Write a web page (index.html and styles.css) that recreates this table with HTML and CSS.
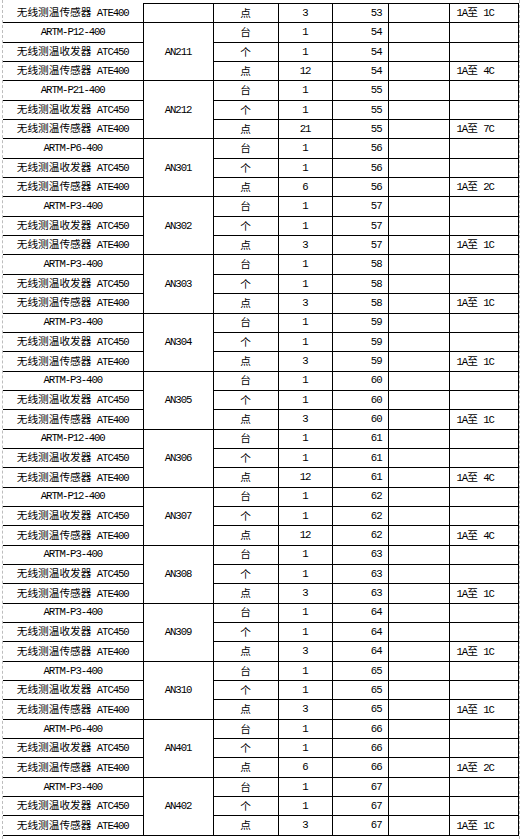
FILE: index.html
```html
<!DOCTYPE html>
<html lang="zh-CN">
<head>
<meta charset="utf-8">
<title>无线测温设备清单</title>
<link rel="stylesheet" href="styles.css">
</head>
<body>
<div class="page">
<table class="sheet">
<colgroup>
<col class="w1"><col class="w2"><col class="w3"><col class="w4"><col class="w5"><col class="w6"><col class="w7">
</colgroup>
<tbody>
<tr><td class="nt">无线测温传感器<span class="en"> ATE400</span></td><td></td><td>点</td><td class="en">3</td><td class="en num">53</td><td></td><td class="rem"><span class="en">1A</span>至<span class="en"> 1C</span></td></tr>

<tr><td class="en">ARTM-P12-400</td><td class="en" rowspan="3">AN211</td><td>台</td><td class="en">1</td><td class="en num">54</td><td></td><td></td></tr>
<tr><td>无线测温收发器<span class="en"> ATC450</span></td><td>个</td><td class="en">1</td><td class="en num">54</td><td></td><td></td></tr>
<tr><td>无线测温传感器<span class="en"> ATE400</span></td><td>点</td><td class="en">12</td><td class="en num">54</td><td></td><td class="rem"><span class="en">1A</span>至<span class="en"> 4C</span></td></tr>

<tr><td class="en">ARTM-P21-400</td><td class="en" rowspan="3">AN212</td><td>台</td><td class="en">1</td><td class="en num">55</td><td></td><td></td></tr>
<tr><td>无线测温收发器<span class="en"> ATC450</span></td><td>个</td><td class="en">1</td><td class="en num">55</td><td></td><td></td></tr>
<tr><td>无线测温传感器<span class="en"> ATE400</span></td><td>点</td><td class="en">21</td><td class="en num">55</td><td></td><td class="rem"><span class="en">1A</span>至<span class="en"> 7C</span></td></tr>

<tr><td class="en">ARTM-P6-400</td><td class="en" rowspan="3">AN301</td><td>台</td><td class="en">1</td><td class="en num">56</td><td></td><td></td></tr>
<tr><td>无线测温收发器<span class="en"> ATC450</span></td><td>个</td><td class="en">1</td><td class="en num">56</td><td></td><td></td></tr>
<tr><td>无线测温传感器<span class="en"> ATE400</span></td><td>点</td><td class="en">6</td><td class="en num">56</td><td></td><td class="rem"><span class="en">1A</span>至<span class="en"> 2C</span></td></tr>

<tr><td class="en">ARTM-P3-400</td><td class="en" rowspan="3">AN302</td><td>台</td><td class="en">1</td><td class="en num">57</td><td></td><td></td></tr>
<tr><td>无线测温收发器<span class="en"> ATC450</span></td><td>个</td><td class="en">1</td><td class="en num">57</td><td></td><td></td></tr>
<tr><td>无线测温传感器<span class="en"> ATE400</span></td><td>点</td><td class="en">3</td><td class="en num">57</td><td></td><td class="rem"><span class="en">1A</span>至<span class="en"> 1C</span></td></tr>

<tr><td class="en">ARTM-P3-400</td><td class="en" rowspan="3">AN303</td><td>台</td><td class="en">1</td><td class="en num">58</td><td></td><td></td></tr>
<tr><td>无线测温收发器<span class="en"> ATC450</span></td><td>个</td><td class="en">1</td><td class="en num">58</td><td></td><td></td></tr>
<tr><td>无线测温传感器<span class="en"> ATE400</span></td><td>点</td><td class="en">3</td><td class="en num">58</td><td></td><td class="rem"><span class="en">1A</span>至<span class="en"> 1C</span></td></tr>

<tr><td class="en">ARTM-P3-400</td><td class="en" rowspan="3">AN304</td><td>台</td><td class="en">1</td><td class="en num">59</td><td></td><td></td></tr>
<tr><td>无线测温收发器<span class="en"> ATC450</span></td><td>个</td><td class="en">1</td><td class="en num">59</td><td></td><td></td></tr>
<tr><td>无线测温传感器<span class="en"> ATE400</span></td><td>点</td><td class="en">3</td><td class="en num">59</td><td></td><td class="rem"><span class="en">1A</span>至<span class="en"> 1C</span></td></tr>

<tr><td class="en">ARTM-P3-400</td><td class="en" rowspan="3">AN305</td><td>台</td><td class="en">1</td><td class="en num">60</td><td></td><td></td></tr>
<tr><td>无线测温收发器<span class="en"> ATC450</span></td><td>个</td><td class="en">1</td><td class="en num">60</td><td></td><td></td></tr>
<tr><td>无线测温传感器<span class="en"> ATE400</span></td><td>点</td><td class="en">3</td><td class="en num">60</td><td></td><td class="rem"><span class="en">1A</span>至<span class="en"> 1C</span></td></tr>

<tr><td class="en">ARTM-P12-400</td><td class="en" rowspan="3">AN306</td><td>台</td><td class="en">1</td><td class="en num">61</td><td></td><td></td></tr>
<tr><td>无线测温收发器<span class="en"> ATC450</span></td><td>个</td><td class="en">1</td><td class="en num">61</td><td></td><td></td></tr>
<tr><td>无线测温传感器<span class="en"> ATE400</span></td><td>点</td><td class="en">12</td><td class="en num">61</td><td></td><td class="rem"><span class="en">1A</span>至<span class="en"> 4C</span></td></tr>

<tr><td class="en">ARTM-P12-400</td><td class="en" rowspan="3">AN307</td><td>台</td><td class="en">1</td><td class="en num">62</td><td></td><td></td></tr>
<tr><td>无线测温收发器<span class="en"> ATC450</span></td><td>个</td><td class="en">1</td><td class="en num">62</td><td></td><td></td></tr>
<tr><td>无线测温传感器<span class="en"> ATE400</span></td><td>点</td><td class="en">12</td><td class="en num">62</td><td></td><td class="rem"><span class="en">1A</span>至<span class="en"> 4C</span></td></tr>

<tr><td class="en">ARTM-P3-400</td><td class="en" rowspan="3">AN308</td><td>台</td><td class="en">1</td><td class="en num">63</td><td></td><td></td></tr>
<tr><td>无线测温收发器<span class="en"> ATC450</span></td><td>个</td><td class="en">1</td><td class="en num">63</td><td></td><td></td></tr>
<tr><td>无线测温传感器<span class="en"> ATE400</span></td><td>点</td><td class="en">3</td><td class="en num">63</td><td></td><td class="rem"><span class="en">1A</span>至<span class="en"> 1C</span></td></tr>

<tr><td class="en">ARTM-P3-400</td><td class="en" rowspan="3">AN309</td><td>台</td><td class="en">1</td><td class="en num">64</td><td></td><td></td></tr>
<tr><td>无线测温收发器<span class="en"> ATC450</span></td><td>个</td><td class="en">1</td><td class="en num">64</td><td></td><td></td></tr>
<tr><td>无线测温传感器<span class="en"> ATE400</span></td><td>点</td><td class="en">3</td><td class="en num">64</td><td></td><td class="rem"><span class="en">1A</span>至<span class="en"> 1C</span></td></tr>

<tr><td class="en">ARTM-P3-400</td><td class="en" rowspan="3">AN310</td><td>台</td><td class="en">1</td><td class="en num">65</td><td></td><td></td></tr>
<tr><td>无线测温收发器<span class="en"> ATC450</span></td><td>个</td><td class="en">1</td><td class="en num">65</td><td></td><td></td></tr>
<tr><td>无线测温传感器<span class="en"> ATE400</span></td><td>点</td><td class="en">3</td><td class="en num">65</td><td></td><td class="rem"><span class="en">1A</span>至<span class="en"> 1C</span></td></tr>

<tr><td class="en">ARTM-P6-400</td><td class="en" rowspan="3">AN401</td><td>台</td><td class="en">1</td><td class="en num">66</td><td></td><td></td></tr>
<tr><td>无线测温收发器<span class="en"> ATC450</span></td><td>个</td><td class="en">1</td><td class="en num">66</td><td></td><td></td></tr>
<tr><td>无线测温传感器<span class="en"> ATE400</span></td><td>点</td><td class="en">6</td><td class="en num">66</td><td></td><td class="rem"><span class="en">1A</span>至<span class="en"> 2C</span></td></tr>

<tr><td class="en">ARTM-P3-400</td><td class="en" rowspan="3">AN402</td><td>台</td><td class="en">1</td><td class="en num">67</td><td></td><td></td></tr>
<tr><td>无线测温收发器<span class="en"> ATC450</span></td><td>个</td><td class="en">1</td><td class="en num">67</td><td></td><td></td></tr>
<tr><td>无线测温传感器<span class="en"> ATE400</span></td><td>点</td><td class="en">3</td><td class="en num">67</td><td></td><td class="rem"><span class="en">1A</span>至<span class="en"> 1C</span></td></tr>
</tbody>
</table>
</div>
</body>
</html>
```

FILE: styles.css
```css
html, body {
  margin: 0;
  padding: 0;
  background: #ffffff;
}

.page {
  margin-left: 2px;
  width: 516px;
  height: 836px;
  padding-top: 3px;
  border-left: 1px dashed #bdbdbd;
  border-right: 1px dashed #bdbdbd;
  overflow: hidden;
}

.sheet {
  border-collapse: collapse;
  table-layout: fixed;
  width: 515px;
  font-family: "Noto Sans CJK SC", sans-serif;
  font-size: 10.67px;
  color: #000;
}

.w1 { width: 140px; }
.w2 { width: 70px; }
.w3 { width: 65px; }
.w4 { width: 54px; }
.w5 { width: 56px; }
.w6 { width: 61px; }
.w7 { width: 69px; }

.sheet tr {
  height: 19.35px;
}

.sheet td {
  border: 1px solid #000;
  padding: 0;
  text-align: center;
  vertical-align: middle;
  line-height: 1;
  white-space: nowrap;
  overflow: hidden;
}

.sheet td:first-child {
  border-left: none;
}

.sheet td.nt {
  border-top: none;
}

.en {
  font-family: "Liberation Mono", monospace;
  letter-spacing: -1.07px;
}

.sheet td.num {
  text-align: right;
  padding-right: 6px;
}

.sheet td.rem {
  text-align: left;
  padding-left: 7px;
}
```
